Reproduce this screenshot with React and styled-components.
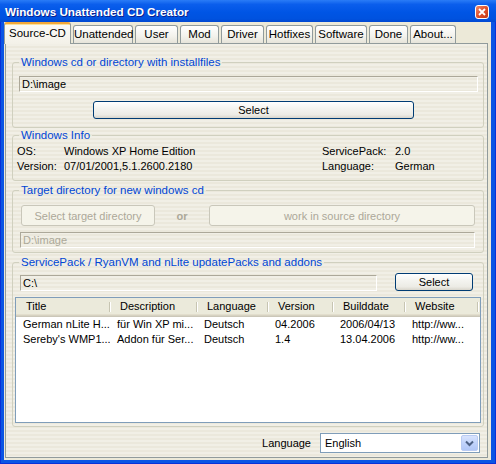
import styled, { createGlobalStyle } from "styled-components";

const GlobalStyle = createGlobalStyle`
  html, body { margin: 0; padding: 0; background: #ece9d8; }
  body { font-family: "Liberation Sans", Arial, sans-serif; font-size: 11px; color: #000; }
  * { box-sizing: border-box; }
`;

const Window = styled.div`
  width: 496px;
  height: 464px;
  display: flex;
  flex-direction: column;
  background: #0a55e4;
  box-shadow: inset 1px 0 #0831d9, inset -1px 0 #0831d9, inset 0 -1px #0831d9;
`;

const TitleBar = styled.div`
  height: 22px;
  flex: none;
  display: flex;
  align-items: center;
  justify-content: space-between;
  padding: 1px 7px 0 5px;
  background: linear-gradient(to bottom, #2a7cf7 0%, #0b5eec 20%, #0055e5 55%, #0052df 85%, #0148d2 100%);
  color: #fff;
  font-weight: bold;
  font-size: 11.7px;
  text-shadow: 1px 1px #0c1f8c;
`;

const CloseButton = styled.div`
  width: 14px;
  height: 14px;
  border: 1px solid #fff;
  border-radius: 3px;
  background: linear-gradient(135deg, #f08a6a 0%, #e0502c 50%, #c23a16 100%);
  display: flex;
  align-items: center;
  justify-content: center;
`;

const Client = styled.div`
  flex: 1;
  margin: 0 5px 4px 4px;
  padding: 0 3px 2px 0;
  background: #ece9d8;
  display: flex;
  flex-direction: column;
`;

const TabStrip = styled.div`
  height: 21px;
  flex: none;
  display: flex;
  align-items: flex-end;
  gap: 2px;
`;

const Tab = styled.div`
  position: relative;
  width: ${(p) => p.$w}px;
  height: ${(p) => (p.$active ? 22 : 18)}px;
  margin-bottom: ${(p) => (p.$active ? -1 : 0)}px;
  z-index: ${(p) => (p.$active ? 2 : 0)};
  border: 1px solid #919b9c;
  border-bottom: none;
  border-top: ${(p) => (p.$active ? "2px solid #f2a83a" : "1px solid #919b9c")};
  border-radius: 3px 3px 0 0;
  background: ${(p) =>
    p.$active
      ? "linear-gradient(to bottom, #ffc83c 0, #fbfaf6 1px, #f3f1e8 100%)"
      : "linear-gradient(to bottom, #ffffff 0%, #f3f2ec 60%, #e6e4da 100%)"};
  text-align: center;
  font-size: 11.5px;
  line-height: 16px;
  padding-top: ${(p) => (p.$active ? 1 : 0)}px;
  white-space: nowrap;
`;

const Panel = styled.div`
  flex: 1;
  margin-left: 1px;
  border: 1px solid #919b9c;
  padding: 12px 3px 0 6px;
  display: flex;
  flex-direction: column;
  background: repeating-linear-gradient(
    to bottom,
    #f1efe6 0px,
    #f1efe6 2px,
    #ebe8dc 2px,
    #ebe8dc 4px
  );
`;

const Group = styled.fieldset`
  margin: ${(p) => p.$mt || 0}px 0 0;
  padding: ${(p) => p.$pad};
  border: 1px solid #d0d0bf;
  border-radius: 3px;
  min-width: 0;
  flex: none;
`;

const Legend = styled.legend`
  margin-left: ${(p) => p.$ml}px;
  padding: 0 2px;
  line-height: 13px;
  font-size: 11.5px;
  color: #0046d5;
`;

const TextBox = styled.div`
  height: 16px;
  flex: ${(p) => (p.$grow ? 1 : "none")};
  margin-top: ${(p) => p.$mt || 0}px;
  border-top: 1px solid #aca899;
  border-left: 1px solid #aca899;
  border-bottom: 1px solid #fff;
  border-right: 1px solid #fff;
  padding-left: 2px;
  line-height: 14px;
  color: ${(p) => (p.$disabled ? "#aca899" : "#000")};
  white-space: nowrap;
`;

const Button = styled.button`
  width: ${(p) => p.$w}px;
  height: ${(p) => p.$h || 18}px;
  margin: ${(p) => p.$m || 0};
  flex: none;
  padding: 0;
  font-family: inherit;
  font-size: 11px;
  color: #000;
  border: 1px solid #003c74;
  border-radius: 3px;
  background: linear-gradient(to bottom, #ffffff 0%, #f4f4f0 40%, #ecebe5 80%, #d8d5cb 100%);

  &:disabled {
    color: #aca899;
    border-color: #c9c7ba;
    background: #f5f4ea;
  }
`;

const InfoGrid = styled.div`
  display: grid;
  grid-template-columns: 47px 258px 73px 1fr;
  line-height: 15px;
`;

const ChoiceRow = styled.div`
  display: flex;
  align-items: center;
  margin-left: 1px;
`;

const OrText = styled.span`
  flex: 1;
  text-align: center;
  font-weight: bold;
  color: #aca899;
`;

const PathRow = styled.div`
  display: flex;
  align-items: flex-end;
  gap: 18px;
  margin: 0 8px 0 5px;
`;

const ListView = styled.div`
  height: 126px;
  margin-top: 6px;
  border: 1px solid #7f9db9;
  background: #fff;
`;

const HeaderRow = styled.div`
  display: flex;
  height: 19px;
  background: #ebeadb;
  box-shadow: inset 0 -1px #cbc7b8, inset 0 -2px #d6d2c2, inset 0 -3px #e2decd;
`;

const HeaderCell = styled.div`
  position: relative;
  width: ${(p) => p.$w}px;
  flex: none;
  padding-left: 10px;
  line-height: 17px;
  white-space: nowrap;

  &::after {
    content: "";
    position: absolute;
    right: 0;
    top: 4px;
    bottom: 5px;
    width: 1px;
    background: #c7c5b2;
    box-shadow: 1px 0 #fff;
  }
`;

const Row = styled.div`
  display: flex;
  height: 15px;
  line-height: 15px;
`;

const Cell = styled.div`
  width: ${(p) => p.$w}px;
  flex: none;
  padding-left: 7px;
  white-space: nowrap;
  overflow: hidden;
`;

const BottomRow = styled.div`
  display: flex;
  align-items: center;
  justify-content: flex-end;
  gap: 9px;
  margin: 6px 4px 0 0;
`;

const Combo = styled.div`
  width: 160px;
  height: 20px;
  border: 1px solid #7f9db9;
  background: #fff;
  display: flex;
  align-items: center;
  padding: 0 1px 0 4px;
`;

const ComboText = styled.span`
  flex: 1;
`;

const ComboButton = styled.div`
  width: 17px;
  height: 16px;
  border: 1px solid #b9cbf3;
  border-radius: 2px;
  background: linear-gradient(to bottom, #d9e4fd 0%, #c1d3fb 50%, #b1c7f7 100%);
  display: flex;
  align-items: center;
  justify-content: center;
`;

const tabs = [
  { label: "Source-CD", w: 67, active: true },
  { label: "Unattended", w: 60 },
  { label: "User", w: 43 },
  { label: "Mod", w: 39 },
  { label: "Driver", w: 43 },
  { label: "Hotfixes", w: 47 },
  { label: "Software", w: 52 },
  { label: "Done", w: 39 },
  { label: "About...", w: 46 },
];

const columns = [
  { label: "Title", w: 94 },
  { label: "Description", w: 87 },
  { label: "Language", w: 71 },
  { label: "Version", w: 65 },
  { label: "Builddate", w: 72 },
  { label: "Website", w: 73 },
];

const packs = [
  ["German nLite H...", "für Win XP mi...", "Deutsch", "04.2006", "2006/04/13", "http://ww..."],
  ["Sereby's WMP1...", "Addon für Ser...", "Deutsch", "1.4", "13.04.2006", "http://ww..."],
];

export default function App() {
  return (
    <>
      <GlobalStyle />
      <Window>
        <TitleBar>
          <span>Windows Unattended CD Creator</span>
          <CloseButton>
            <svg width="8" height="8" viewBox="0 0 8 8">
              <path d="M1 1 L7 7 M7 1 L1 7" stroke="#fff" strokeWidth="1.8" />
            </svg>
          </CloseButton>
        </TitleBar>
        <Client>
          <TabStrip>
            {tabs.map((t) => (
              <Tab key={t.label} $w={t.w} $active={t.active}>
                {t.label}
              </Tab>
            ))}
          </TabStrip>
          <Panel>
            <Group $pad="7px 5px 8px 6px">
              <Legend $ml={0}>Windows cd or directory with installfiles</Legend>
              <TextBox>D:\image</TextBox>
              <Button $w={321} $m="9px 0 0 74px">Select</Button>
            </Group>

            <Group $mt={1} $pad="2px 4px 6px 4px">
              <Legend $ml={2}>Windows Info</Legend>
              <InfoGrid>
                <span>OS:</span>
                <span>Windows XP Home Edition</span>
                <span>ServicePack:</span>
                <span>2.0</span>
                <span>Version:</span>
                <span>07/01/2001,5.1.2600.2180</span>
                <span>Language:</span>
                <span>German</span>
              </InfoGrid>
            </Group>

            <Group $mt={3} $pad="8px 8px 4px 7px">
              <Legend $ml={-1}>Target directory for new windows cd</Legend>
              <ChoiceRow>
                <Button $w={134} $h={21} disabled>Select target directory</Button>
                <OrText>or</OrText>
                <Button $w={266} $h={21} disabled>work in source directory</Button>
              </ChoiceRow>
              <TextBox $mt={6} $disabled>D:\image</TextBox>
            </Group>

            <Group $mt={3} $pad="4px 2px 3px 2px">
              <Legend $ml={4}>ServicePack / RyanVM and nLite updatePacks and addons</Legend>
              <PathRow>
                <TextBox $grow>C:\</TextBox>
                <Button $w={78}>Select</Button>
              </PathRow>
              <ListView>
                <HeaderRow>
                  {columns.map((c) => (
                    <HeaderCell key={c.label} $w={c.w}>{c.label}</HeaderCell>
                  ))}
                </HeaderRow>
                {packs.map((r) => (
                  <Row key={r[0]}>
                    {r.map((v, i) => (
                      <Cell key={i} $w={columns[i].w}>{v}</Cell>
                    ))}
                  </Row>
                ))}
              </ListView>
            </Group>

            <BottomRow>
              <span>Language</span>
              <Combo>
                <ComboText>English</ComboText>
                <ComboButton>
                  <svg width="9" height="7" viewBox="0 0 9 7">
                    <path d="M1 1.5 L4.5 5 L8 1.5" stroke="#4d6185" strokeWidth="2" fill="none" />
                  </svg>
                </ComboButton>
              </Combo>
            </BottomRow>
          </Panel>
        </Client>
      </Window>
    </>
  );
}
